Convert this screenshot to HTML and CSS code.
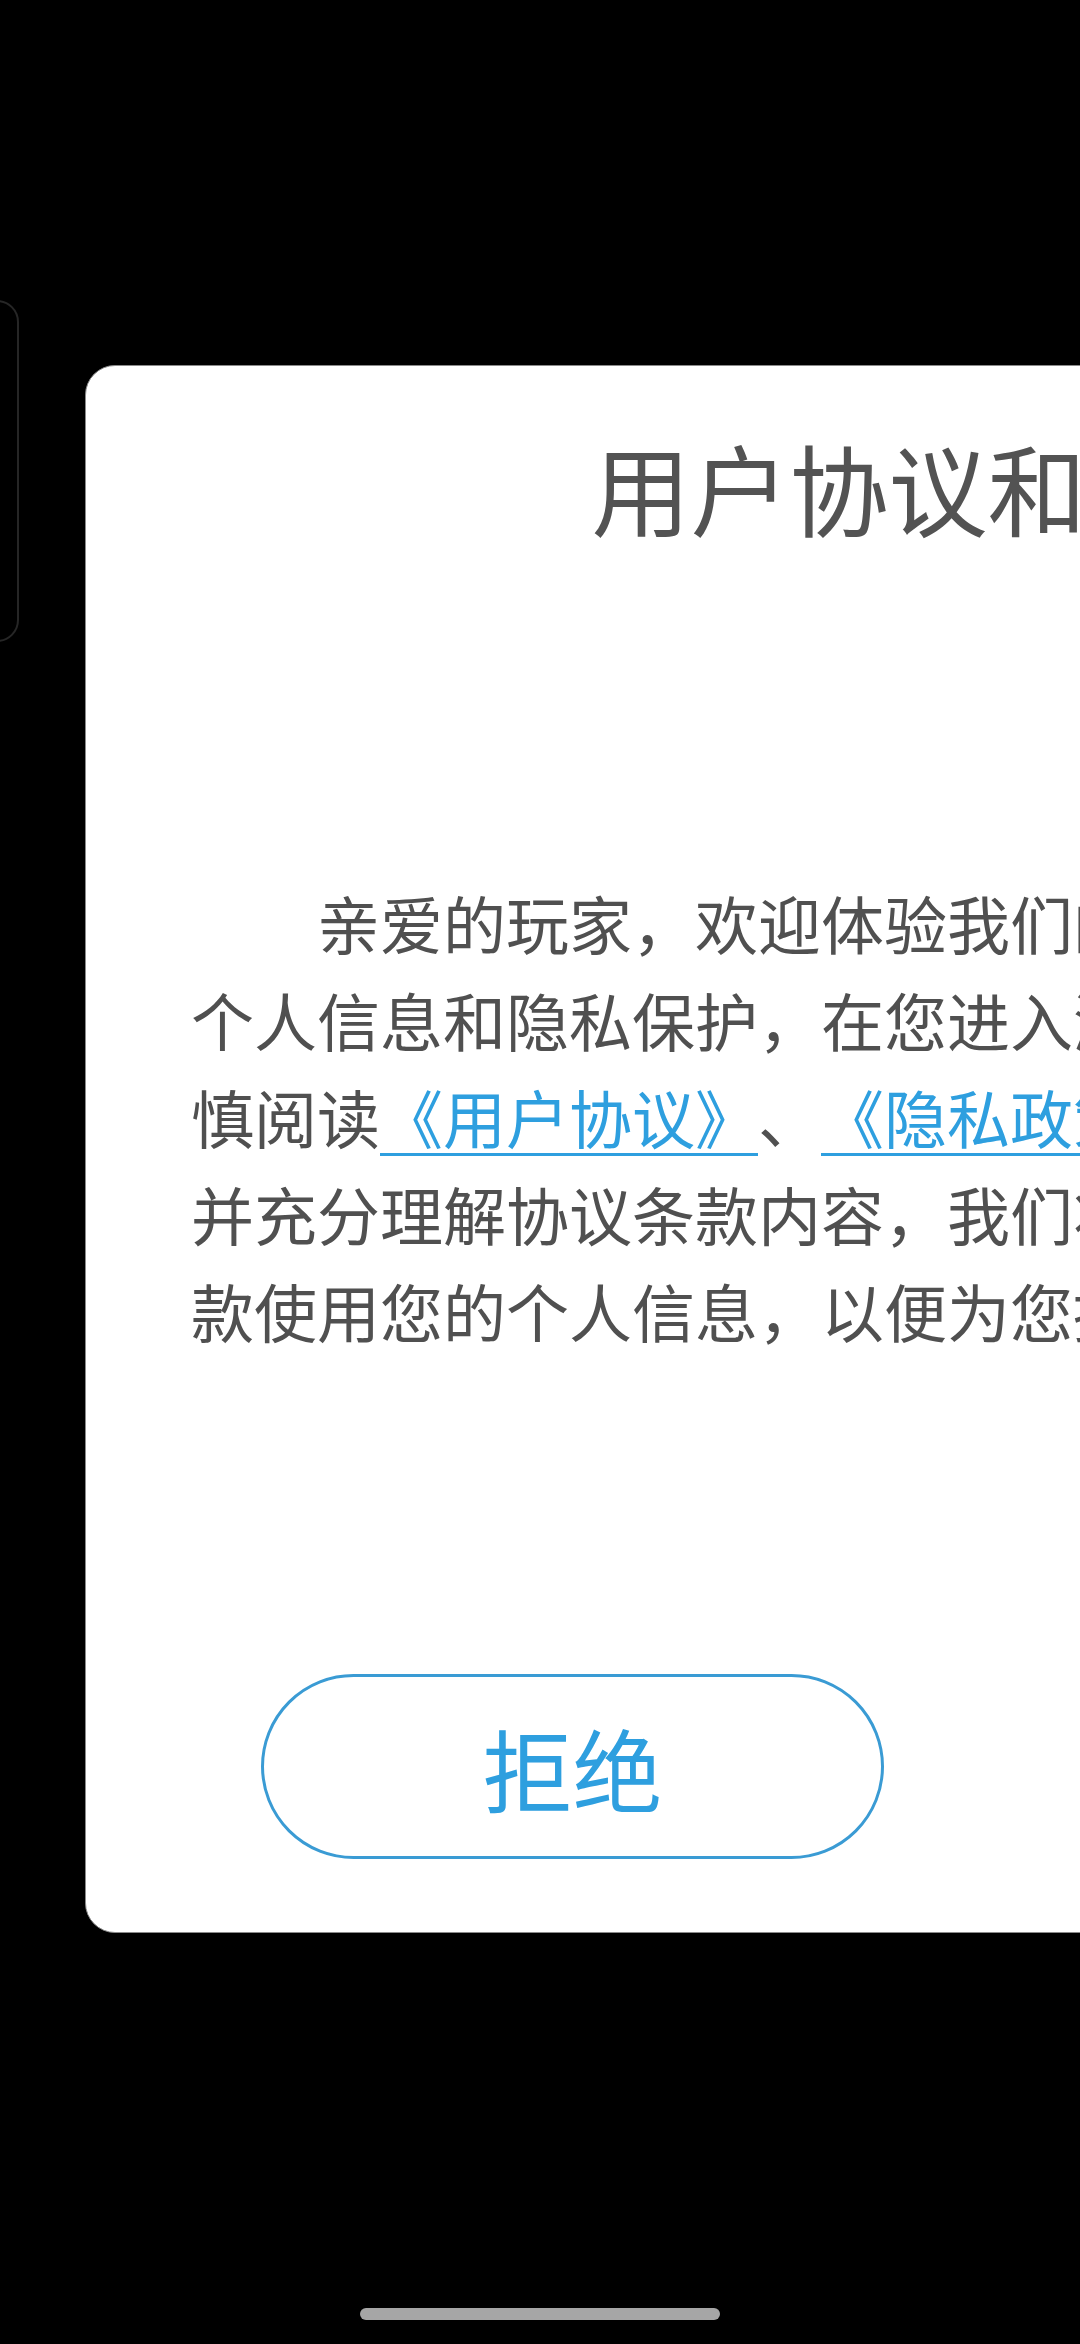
FILE: index.html
```html
<!DOCTYPE html>
<html lang="zh-CN">
<head>
<meta charset="utf-8">
<title>用户协议和隐私政策</title>
<link rel="stylesheet" href="styles.css">
</head>
<body>
<div class="screen">
  <div class="ghost-card"></div>
  <div class="dialog">
    <h1 class="title">用户协议和隐私政策</h1>
    <div class="content">
      <span class="line indent">亲爱的玩家，欢迎体验我们的游戏！我们非常重视您的</span>
      <span class="line">个人信息和隐私保护，在您进入游戏前，请您务必审</span>
      <span class="line">慎阅读<a class="link">《用户协议》</a>、<a class="link">《隐私政策》</a>，并充分理解协议</span>
      <span class="line">并充分理解协议条款内容，我们将严格按照您同意的条</span>
      <span class="line">款使用您的个人信息，以便为您提供更好的游戏服务。</span>
    </div>
    <div class="actions">
      <button class="btn btn-outline">拒绝</button>
      <button class="btn btn-solid">同意</button>
    </div>
  </div>
  <div class="home-bar"></div>
</div>
</body>
</html>
```
FILE: styles.css
```css
html, body {
  margin: 0;
  padding: 0;
  background: #000;
  overflow: hidden;
}
.screen {
  position: relative;
  width: 1080px;
  height: 2344px;
  overflow: hidden;
  padding: 365px 0 0 85px;
  box-sizing: border-box;
  font-family: "Noto Sans CJK SC", "Noto Sans", sans-serif;
  text-spacing-trim: space-all;
  font-kerning: none;
}
.ghost-card {
  position: absolute;
  left: -40px;
  top: 300px;
  width: 59px;
  height: 342px;
  border: 2px solid #262626;
  border-radius: 22px;
  box-sizing: border-box;
}
.dialog {
  width: 1904px;
  height: 1568px;
  background: #fff;
  border: 1px solid #8a8a8a;
  border-radius: 30px;
  box-sizing: border-box;
  display: flex;
  flex-direction: column;
  padding-top: 56px;
}
.title {
  margin: 0;
  text-align: center;
  font-size: 99px;
  line-height: 129px;
  font-weight: 400;
  color: #535353;
}
.content {
  margin-top: 322px;
  padding-left: 105px;
  display: flex;
  flex-direction: column;
  font-size: 63px;
  line-height: 97px;
  color: #505050;
}
.line {
  display: block;
  white-space: nowrap;
}
.indent {
  text-indent: 126px;
}
.link {
  color: #2e9fdf;
  text-decoration: underline;
  text-decoration-thickness: 3px;
  text-underline-offset: 10px;
}
.actions {
  margin-top: 316px;
  display: flex;
  justify-content: space-between;
  padding: 0 175px;
}
.btn {
  width: 623px;
  height: 185px;
  border-radius: 93px;
  font-family: "Noto Sans CJK SC", "Noto Sans", sans-serif;
  font-size: 90px;
  line-height: 1;
  padding: 0;
  box-sizing: border-box;
}
.btn-outline {
  background: #fff;
  border: 3px solid #3a9bd4;
  color: #2e9fdf;
}
.btn-solid {
  background: #2e9fdf;
  border: 3px solid #2e9fdf;
  color: #fff;
}
.home-bar {
  position: absolute;
  left: 360px;
  top: 2308px;
  width: 360px;
  height: 12px;
  border-radius: 6px;
  background: #a6a6a6;
}
```
